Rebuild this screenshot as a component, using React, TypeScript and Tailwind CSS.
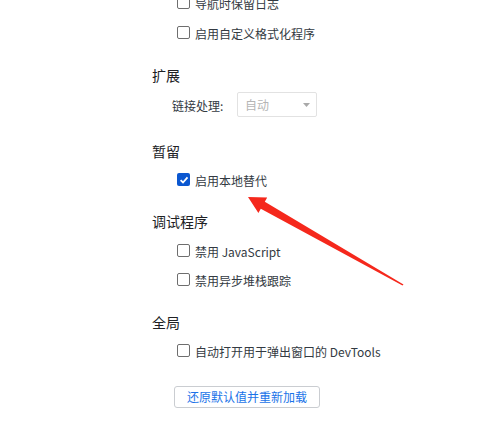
import React from 'react';

const font = { fontFamily: '"Noto Sans CJK SC", "Noto Sans", sans-serif' };

function Box({ checked = false }: { checked?: boolean }) {
  if (checked) {
    return (
      <span className="w-[13px] h-[13px] rounded-[2px] bg-[#0b57d0] flex items-center justify-center shrink-0">
        <svg width="10" height="10" viewBox="0 0 10 10">
          <path d="M1.6 5.2 L4 7.5 L8.5 2.4" fill="none" stroke="#fff" strokeWidth="1.8" />
        </svg>
      </span>
    );
  }
  return <span className="w-[13px] h-[13px] rounded-[2px] border border-[#6e6e6e] bg-white shrink-0" />;
}

function Option({ label, checked, className = '' }: { label: string; checked?: boolean; className?: string }) {
  return (
    <div className={`h-[29px] flex items-center pl-[25px] gap-[5px] text-[12px] text-[#333a42] ${className}`}>
      <Box checked={checked} />
      <span className="pt-[2px]">{label}</span>
    </div>
  );
}

function Heading({ title, className = '' }: { title: string; className?: string }) {
  return <div className={`h-[30px] flex items-center pt-[2px] text-[14px] text-[#202124] ${className}`}>{title}</div>;
}

export default function App() {
  return (
    <div className="relative w-[490px] h-[441px] overflow-hidden bg-white" style={font}>
      <div className="flex flex-col pl-[152px]">
        <Option label="导航时保留日志" className="-mt-[12px]" />
        <Option label="启用自定义格式化程序" className="mt-[1px]" />

        <Heading title="扩展" className="mt-[12px]" />
        <div className="h-[25px] mt-[3px] flex items-center pl-[20px] text-[12px] text-[#333a42]">
          <span className="w-[65px] pt-[2px]">链接处理:</span>
          <div className="w-[80px] h-[25px] border border-[#e2e2e2] rounded-[2px] flex items-center justify-between pl-[7px] pr-[6px] text-[#b5b5b5]">
            <span className="pt-[1px]">自动</span>
            <svg width="7" height="4" viewBox="0 0 7 4">
              <path d="M0 0 L7 0 L3.5 4 Z" fill="#a9a9a9" />
            </svg>
          </div>
        </div>

        <Heading title="暂留" className="mt-[18px]" />
        <Option label="启用本地替代" checked />

        <Heading title="调试程序" className="mt-[11px]" />
        <Option label="禁用 JavaScript" className="mt-[1px]" />
        <Option label="禁用异步堆栈跟踪" />

        <Heading title="全局" className="mt-[12px]" />
        <Option label="自动打开用于弹出窗口的 DevTools" />

        <div className="mt-[18px] ml-[22px]">
          <button className="h-[22px] px-[12px] pt-[1px] border border-[#cacdd1] rounded-[3px] bg-white text-[12px] text-[#1a73e8] leading-none">
            还原默认值并重新加载
          </button>
        </div>
      </div>

      <svg className="absolute left-0 top-0 pointer-events-none" width="490" height="441" viewBox="0 0 490 441">
        <polygon
          points="248,197 267.2,197.5 264.8,201.8 403.5,284.4 402.5,285.6 260.8,208.8 258.4,213.1"
          fill="#f5281c"
        />
      </svg>
    </div>
  );
}
